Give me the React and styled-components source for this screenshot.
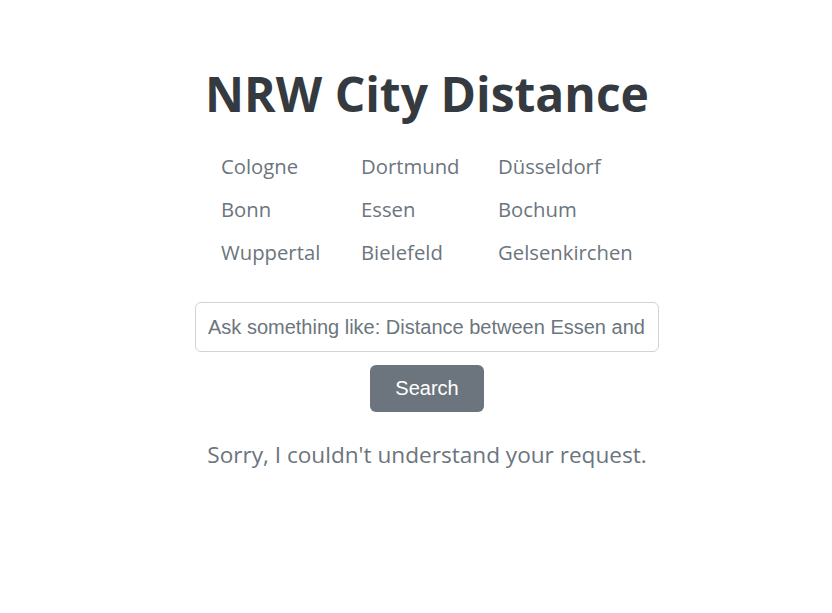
import React from "react";
import styled, { createGlobalStyle } from "styled-components";

const Global = createGlobalStyle`
  html, body { margin: 0; padding: 0; background: #fff; }
  body { font-family: "Open Sans", "Noto Sans", sans-serif; }
  * { box-sizing: border-box; }
`;

const Page = styled.main`
  display: flex;
  flex-direction: column;
  align-items: center;
  padding: 62px 0 0 22px;
`;

const Title = styled.h1`
  margin: 0;
  font-family: "Open Sans", sans-serif;
  font-weight: 700;
  font-size: 48px;
  line-height: 64px;
  color: #343a40;
`;

const CityGrid = styled.ul`
  list-style: none;
  margin: 19px 0 0 0;
  padding: 0;
  display: grid;
  grid-template-columns: 140px 137px 135px;
  row-gap: 0;
`;

const City = styled.li`
  font-size: 20.3px;
  line-height: 43px;
  color: #6c757d;
  white-space: nowrap;
`;

const SearchInput = styled.input`
  margin-top: 28px;
  width: 464px;
  height: 50px;
  padding: 0 12px;
  border: 1px solid #ced4da;
  border-radius: 6px;
  font-family: "Liberation Sans", Arial, sans-serif;
  font-size: 20px;
  color: #495057;
  outline: none;
  &::placeholder { color: #6c757d; opacity: 1; }
`;

const Button = styled.button`
  margin-top: 13px;
  width: 114px;
  height: 47px;
  border: none;
  border-radius: 6px;
  background: #6c757d;
  color: #fff;
  font-family: "Liberation Sans", Arial, sans-serif;
  font-size: 20px;
`;

const Message = styled.p`
  margin: 26px 0 0 0;
  font-size: 22.6px;
  line-height: 34px;
  color: #6c757d;
`;

const cities = [
  "Cologne", "Dortmund", "Düsseldorf",
  "Bonn", "Essen", "Bochum",
  "Wuppertal", "Bielefeld", "Gelsenkirchen",
];

export default function App() {
  return (
    <>
      <Global />
      <Page>
        <Title>NRW City Distance</Title>
        <CityGrid>
          {cities.map((c) => (
            <City key={c}>{c}</City>
          ))}
        </CityGrid>
        <SearchInput placeholder="Ask something like: Distance between Essen and Bonn" />
        <Button>Search</Button>
        <Message>Sorry, I couldn't understand your request.</Message>
      </Page>
    </>
  );
}
